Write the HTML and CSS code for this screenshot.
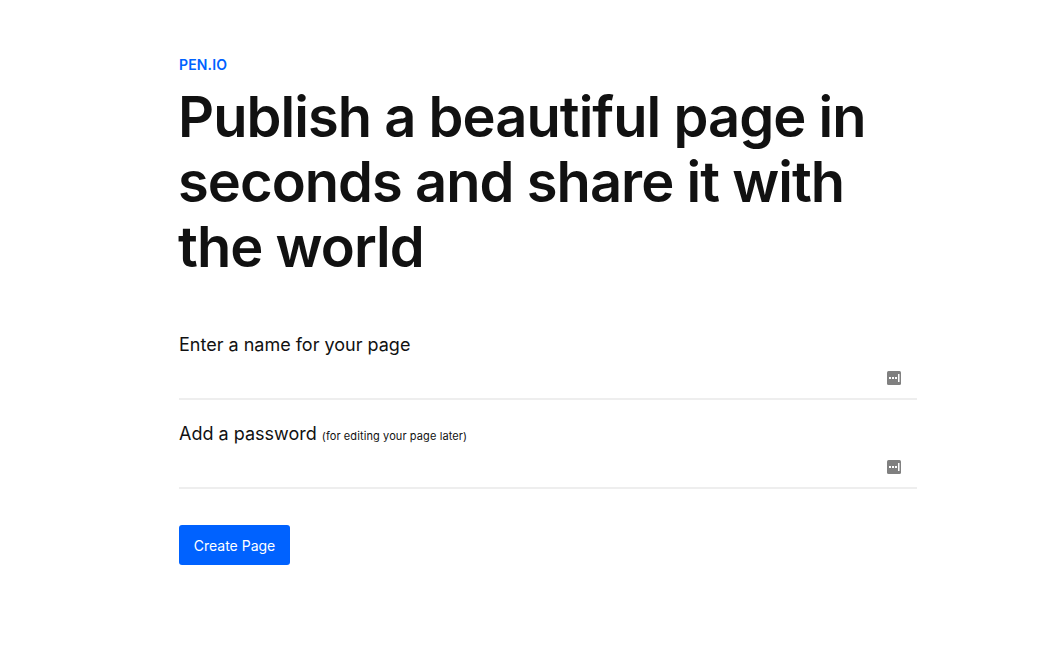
FILE: index.html
```html
<!DOCTYPE html>
<html lang="en">

<head>
    <meta charset="UTF-8" />
    <meta name="viewport" content="width=device-width, initial-scale=1.0" />
    <title>Pen.io</title>
    <link rel="stylesheet" href="styles.css">
</head>

<body>
    <div class="container">
        <p class="brand">PEN.IO</p>
        <h1>Publish a beautiful page in seconds and share it with the world</h1>

        <form class="form">
            <div class="field">
                <label for="name">Enter a name for your page</label>
                <div class="input-row">
                    <input type="text" id="name">
                    <svg class="key-icon" width="16" height="16" viewBox="0 0 16 16">
                        <rect x="1" y="1" width="14" height="14" rx="1.5" fill="#808080" />
                        <rect x="3" y="7" width="2" height="2" fill="#fff" />
                        <rect x="6" y="7" width="2" height="2" fill="#fff" />
                        <rect x="9" y="7" width="2" height="2" fill="#fff" />
                        <rect x="12" y="4" width="1.5" height="8" fill="#fff" />
                    </svg>
                </div>
            </div>

            <div class="field">
                <label for="password">Add a password <small>(for editing your page later)</small></label>
                <div class="input-row">
                    <input type="password" id="password">
                    <svg class="key-icon" width="16" height="16" viewBox="0 0 16 16">
                        <rect x="1" y="1" width="14" height="14" rx="1.5" fill="#808080" />
                        <rect x="3" y="7" width="2" height="2" fill="#fff" />
                        <rect x="6" y="7" width="2" height="2" fill="#fff" />
                        <rect x="9" y="7" width="2" height="2" fill="#fff" />
                        <rect x="12" y="4" width="1.5" height="8" fill="#fff" />
                    </svg>
                </div>
            </div>

            <button type="button">Create Page</button>
        </form>
    </div>
</body>

</html>
```

FILE: styles.css
```css
* {
    box-sizing: border-box;
}

body {
    margin: 0;
    font-family: Inter, "Liberation Sans", sans-serif;
    background: white;
    color: #111;
}

.container {
    width: 738px;
    margin-left: 179px;
    padding-top: 56px;
}

.brand {
    margin: 0;
    font-size: 14px;
    line-height: 17px;
    font-weight: 600;
    letter-spacing: 0.15px;
    color: #0062ff;
}

h1 {
    margin: 12px 0 0 -1px;
    font-size: 56px;
    line-height: 65px;
    font-weight: 600;
    letter-spacing: -0.95px;
}

.form {
    margin-top: 54px;
}

.field {
    margin-bottom: 23px;
}

label {
    display: block;
    font-size: 18px;
    line-height: 22px;
}

small {
    font-size: 11px;
    line-height: 1;
    letter-spacing: 0.1px;
}

.input-row {
    display: flex;
    align-items: center;
    height: 44px;
    padding-top: 1px;
    padding-right: 15px;
    border-bottom: 2px solid #eee;
}

input {
    flex: 1;
    height: 100%;
    border: none;
    outline: none;
    font-size: 16px;
    background: transparent;
}

button {
    display: block;
    margin-top: 36px;
    width: 111px;
    height: 40px;
    border: none;
    border-radius: 3px;
    background: #0062ff;
    color: white;
    font-family: Inter, "Liberation Sans", sans-serif;
    font-size: 14px;
}
```
